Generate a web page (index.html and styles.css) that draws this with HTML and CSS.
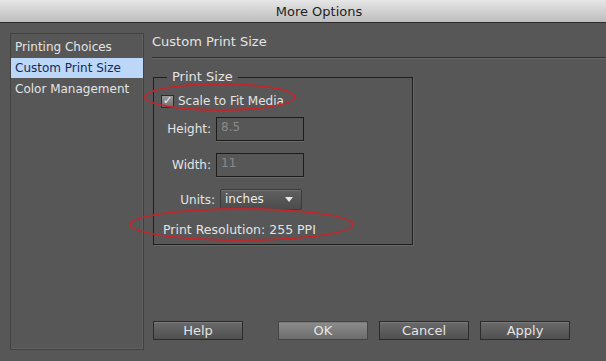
FILE: index.html
```html
<!DOCTYPE html>
<html>
    <head>
        <title>More Options</title>
        <meta name="viewport" content="width=device-width, initial-scale=1.0">
        <link rel="stylesheet" href="styles.css">
    </head>
    <body>
        <div class="titlebar">More Options</div>
        <div class="main">
            <ul class="sidebar">
                <li>Printing Choices</li>
                <li class="selected">Custom Print Size</li>
                <li>Color Management</li>
            </ul>
            <div class="content">
                <h3 class="heading">Custom Print Size</h3>
                <div class="group">
                    <span class="legend">Print Size</span>
                    <label class="check">
                        <span class="box">&#10003;</span>Scale to Fit Media
                        <span class="ring ring-scale"></span>
                    </label>
                    <div class="row">
                        <span class="label">Height:</span>
                        <span class="field">8.5</span>
                    </div>
                    <div class="row">
                        <span class="label">Width:</span>
                        <span class="field">11</span>
                    </div>
                    <div class="row units">
                        <span class="label">Units:</span>
                        <span class="select">inches<span class="arrow"></span></span>
                    </div>
                    <p class="resolution">
                        Print Resolution: 255 PPI
                        <span class="ring ring-res"></span>
                    </p>
                </div>
                <div class="buttons">
                    <button type="button" class="help">Help</button>
                    <button type="button" class="ok">OK</button>
                    <button type="button">Cancel</button>
                    <button type="button">Apply</button>
                </div>
            </div>
        </div>
    </body>
</html>
```

FILE: styles.css
```css
body {
    margin: 0;
    width: 606px;
    height: 361px;
    overflow: hidden;
    background-color: #575757;
    font-family: "DejaVu Sans", sans-serif;
    font-size: 12px;
    color: #e4e4e4;
}
.titlebar {
    height: 22px;
    line-height: 23px;
    padding-left: 32px;
    text-align: center;
    font-size: 13px;
    color: #1e1e1e;
    background: linear-gradient(#e6e6e6, #bdbdbd);
    border-bottom: 1px solid #2c2c2c;
}
.main {
    display: flex;
    padding: 10px 0 0 10px;
}
.sidebar {
    list-style: none;
    margin: 0;
    padding: 3px 0 0;
    width: 132px;
    height: 312px;
    border: 1px solid #414141;
    box-shadow: inset -1px -1px 0 #626262;
}
.sidebar li {
    height: 20px;
    line-height: 20px;
    padding-left: 4px;
    margin-bottom: 1px;
}
.sidebar li.selected {
    background-color: #bcd7f7;
    color: #162a55;
}
.content {
    flex: 1;
    margin-left: 8px;
}
.heading {
    margin: 0;
    font-weight: normal;
    font-size: 13px;
    line-height: 18px;
    height: 24px;
    border-bottom: 1px solid #2f2f2f;
    box-shadow: 0 1px 0 #676767;
}
.group {
    position: relative;
    width: 258px;
    height: 166px;
    margin: 19px 0 0 1px;
    border: 1px solid #1f1f1f;
    box-shadow: 1px 1px 0 #686868;
    display: flex;
    flex-direction: column;
}
.legend {
    position: absolute;
    top: -9px;
    left: 13px;
    padding: 0 5px;
    background-color: #575757;
    font-size: 13px;
}
.check {
    position: relative;
    display: flex;
    align-items: center;
    margin: 15px 0 0 7px;
    height: 16px;
}
.box {
    width: 11px;
    height: 11px;
    margin-right: 4px;
    border: 1px solid #2c2c2c;
    background: linear-gradient(#9a9a9a, #6e6e6e);
    color: #f2f2f2;
    font-size: 11px;
    line-height: 10px;
    text-align: center;
}
.row {
    display: flex;
    align-items: center;
    margin-top: 7px;
    height: 25px;
}
.row + .row {
    margin-top: 11px;
}
.label {
    width: 57px;
    text-align: right;
    padding-right: 5px;
}
.field {
    width: 82px;
    height: 22px;
    line-height: 19px;
    padding-left: 4px;
    border: 1px solid #1c1c1c;
    box-shadow: 0 1px 0 #6a6a6a;
    color: #8a8a8a;
}
.units {
    height: 21px;
}
.row.units {
    margin-top: 12px;
}
.units .label {
    width: 61px;
}
.select {
    position: relative;
    width: 76px;
    height: 19px;
    line-height: 18px;
    padding-left: 4px;
    border: 1px solid #3a3a3a;
    border-radius: 2px;
    background: linear-gradient(#5f5f5f, #4c4c4c);
    box-shadow: inset 0 1px 0 #707070;
    color: #ececec;
}
.arrow {
    position: absolute;
    right: 8px;
    top: 7px;
    border-left: 4px solid transparent;
    border-right: 4px solid transparent;
    border-top: 5px solid #e8e8e8;
}
.resolution {
    position: relative;
    margin: 12px 0 0 9px;
    line-height: 16px;
    font-size: 12.5px;
}
.ring {
    position: absolute;
    border: 2px solid #c1272d;
    border-radius: 50%;
    pointer-events: none;
}
.ring-scale {
    left: -17px;
    top: -10px;
    width: 148px;
    height: 24px;
}
.ring-res {
    left: -34px;
    top: -14px;
    width: 221px;
    height: 29px;
}
.buttons {
    display: flex;
    gap: 11px;
    margin-top: 76px;
    margin-left: 1px;
}
button {
    width: 90px;
    height: 19px;
    padding: 0;
    font-family: "DejaVu Sans", sans-serif;
    font-size: 13px;
    color: #e4e4e4;
    border: 1px solid #2b2b2b;
    background: linear-gradient(#6a6a6a, #505050);
    box-shadow: inset 0 1px 0 #7a7a7a;
}
.help {
    margin-right: 24px;
}
.ok {
    background: linear-gradient(#8d8d8d, #6c6c6c);
    border-color: #444;
}
```
